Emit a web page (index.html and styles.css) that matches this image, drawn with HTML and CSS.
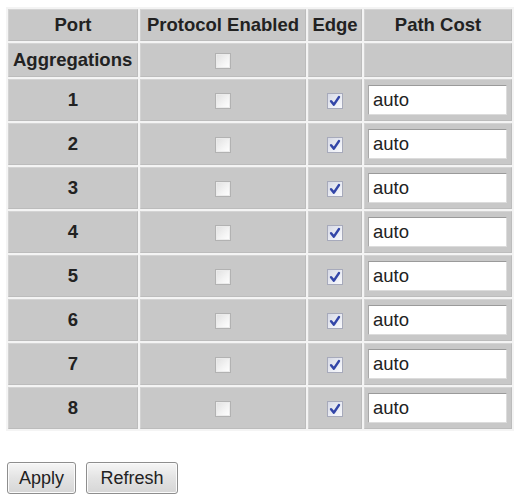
FILE: index.html
```html
<!DOCTYPE html>
<html>
<head>
<meta charset="utf-8">
<link rel="stylesheet" href="styles.css">
</head>
<body>
<table class="grid">
  <colgroup>
    <col class="c-port"><col class="c-proto"><col class="c-edge"><col class="c-cost">
  </colgroup>
  <tr class="head">
    <th>Port</th><th>Protocol Enabled</th><th>Edge</th><th>Path Cost</th>
  </tr>
  <tr class="agg">
    <th>Aggregations</th><td class="mid"><span class="cb off"></span></td><td></td><td></td>
  </tr>
  <tr class="row"><th>1</th><td class="mid"><span class="cb off"></span></td><td class="mid"><span class="cb on"><svg viewBox="0 0 10 10"><path d="M2.2 5.2 L4.2 7.6 L7.8 2.2" /></svg></span></td><td class="cost"><span class="field">auto</span></td></tr>
  <tr class="row"><th>2</th><td class="mid"><span class="cb off"></span></td><td class="mid"><span class="cb on"><svg viewBox="0 0 10 10"><path d="M2.2 5.2 L4.2 7.6 L7.8 2.2" /></svg></span></td><td class="cost"><span class="field">auto</span></td></tr>
  <tr class="row"><th>3</th><td class="mid"><span class="cb off"></span></td><td class="mid"><span class="cb on"><svg viewBox="0 0 10 10"><path d="M2.2 5.2 L4.2 7.6 L7.8 2.2" /></svg></span></td><td class="cost"><span class="field">auto</span></td></tr>
  <tr class="row"><th>4</th><td class="mid"><span class="cb off"></span></td><td class="mid"><span class="cb on"><svg viewBox="0 0 10 10"><path d="M2.2 5.2 L4.2 7.6 L7.8 2.2" /></svg></span></td><td class="cost"><span class="field">auto</span></td></tr>
  <tr class="row"><th>5</th><td class="mid"><span class="cb off"></span></td><td class="mid"><span class="cb on"><svg viewBox="0 0 10 10"><path d="M2.2 5.2 L4.2 7.6 L7.8 2.2" /></svg></span></td><td class="cost"><span class="field">auto</span></td></tr>
  <tr class="row"><th>6</th><td class="mid"><span class="cb off"></span></td><td class="mid"><span class="cb on"><svg viewBox="0 0 10 10"><path d="M2.2 5.2 L4.2 7.6 L7.8 2.2" /></svg></span></td><td class="cost"><span class="field">auto</span></td></tr>
  <tr class="row"><th>7</th><td class="mid"><span class="cb off"></span></td><td class="mid"><span class="cb on"><svg viewBox="0 0 10 10"><path d="M2.2 5.2 L4.2 7.6 L7.8 2.2" /></svg></span></td><td class="cost"><span class="field">auto</span></td></tr>
  <tr class="row"><th>8</th><td class="mid"><span class="cb off"></span></td><td class="mid"><span class="cb on"><svg viewBox="0 0 10 10"><path d="M2.2 5.2 L4.2 7.6 L7.8 2.2" /></svg></span></td><td class="cost"><span class="field">auto</span></td></tr>
</table>
<div class="actions">
  <button class="btn btn-apply" type="button">Apply</button>
  <button class="btn btn-refresh" type="button">Refresh</button>
</div>
</body>
</html>
```

FILE: styles.css
```css
html, body {
  background: #ffffff;
}
body {
  margin: 0;
  padding: 7px 0 0 6px;
  font-family: "Liberation Sans", Arial, sans-serif;
  color: #222222;
}
.grid {
  border-collapse: separate;
  border-spacing: 2px;
  table-layout: fixed;
  width: 508px;
  background: #f4f4f4;
}
.c-port { width: 130px; }
.c-proto { width: 166px; }
.c-edge { width: 54px; }
.c-cost { width: 148px; }
.grid th, .grid td {
  background: #c8c8c8;
  padding: 0;
  box-sizing: border-box;
  border: 1px solid #bcbcbc;
  border-top-color: #d4d4d4;
  border-left-color: #d2d2d2;
  text-align: center;
  vertical-align: middle;
}
.grid th {
  font-weight: bold;
  font-size: 18.5px;
  color: #222222;
  white-space: nowrap;
}
.head th, .head td { height: 32px; }
.agg th, .agg td { height: 34px; }
.row th, .row td { height: 42px; }
.agg th { text-align: left; padding-left: 4px; }
.cb {
  display: inline-block;
  width: 16px;
  height: 16px;
  box-sizing: border-box;
  vertical-align: middle;
}
.cb.off {
  border: 1px solid #b2b2b2;
  background: linear-gradient(135deg, #e0e0e0 0%, #f4f4f4 60%, #ffffff 100%);
  box-shadow: inset 0 0 0 1px #ebebeb;
}
.cb.on {
  border: 1px solid #a7aabb;
  background: linear-gradient(135deg, #d6d9e5 0%, #eceef5 60%, #f8f9fc 100%);
}
.cb.on svg {
  display: block;
  width: 14px;
  height: 14px;
}
.cb.on path {
  fill: none;
  stroke: #3346a8;
  stroke-width: 1.8;
  stroke-linecap: round;
  stroke-linejoin: round;
}
.grid td.cost {
  text-align: left;
  padding: 0 4px 0 3px;
}
.field {
  display: block;
  height: 30px;
  box-sizing: border-box;
  background: #ffffff;
  border: 1px solid #a8a8a8;
  border-top-color: #9a9a9a;
  border-bottom-color: #dcdcdc;
  border-right-color: #dcdcdc;
  font-size: 18.5px;
  line-height: 28px;
  padding-left: 4px;
  color: #222222;
}
.actions {
  display: flex;
  gap: 10px;
  margin-top: 31px;
  padding-left: 1px;
}
.btn {
  font-family: "Liberation Sans", Arial, sans-serif;
  font-size: 18px;
  color: #222222;
  height: 32px;
  box-sizing: border-box;
  padding: 0;
  border: 1px solid #8e8e8e;
  border-radius: 3px;
  background: linear-gradient(#f6f6f6, #e3e3e3 50%, #d6d6d6);
  box-shadow: inset 0 0 0 1px #fbfbfb;
}
.btn-apply { width: 69px; }
.btn-refresh { width: 92px; }
```
